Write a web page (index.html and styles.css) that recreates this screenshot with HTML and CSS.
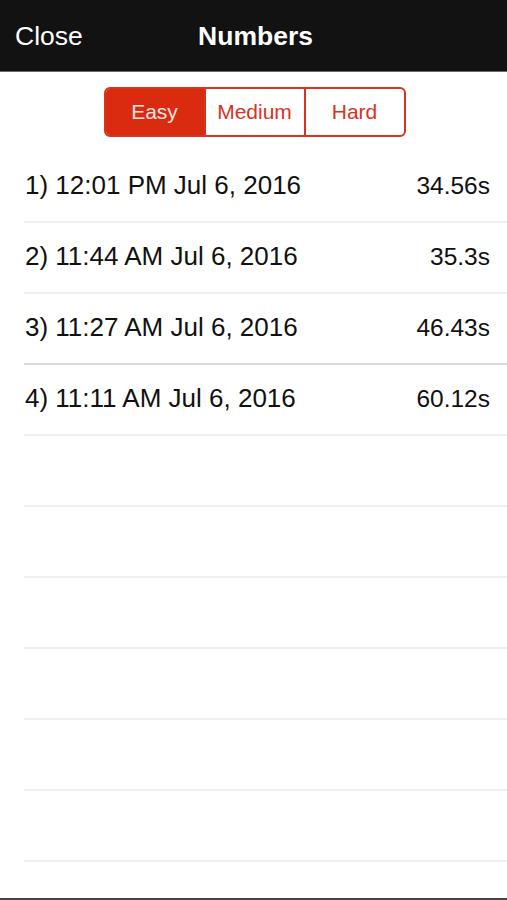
FILE: index.html
```html
<!DOCTYPE html>
<html>
<head>
<meta charset="utf-8">
<link rel="stylesheet" href="styles.css">
</head>
<body>
<div class="screen">
  <header class="navbar">
    <span class="nav-left">Close</span>
    <span class="nav-title">Numbers</span>
    <span class="nav-right"></span>
  </header>
  <div class="seg-wrap">
    <div class="segmented">
      <div class="seg active">Easy</div>
      <div class="seg">Medium</div>
      <div class="seg">Hard</div>
    </div>
  </div>
  <ul class="list">
    <li class="row"><span class="label">1) 12:01 PM Jul 6, 2016</span><span class="value">34.56s</span></li>
    <li class="row"><span class="label">2) 11:44 AM Jul 6, 2016</span><span class="value">35.3s</span></li>
    <li class="row dark-sep"><span class="label">3) 11:27 AM Jul 6, 2016</span><span class="value">46.43s</span></li>
    <li class="row"><span class="label">4) 11:11 AM Jul 6, 2016</span><span class="value">60.12s</span></li>
    <li class="row"></li>
    <li class="row"></li>
    <li class="row"></li>
    <li class="row"></li>
    <li class="row"></li>
    <li class="row"></li>
  </ul>
  <div class="spacer"></div>
  <div class="bottom-edge"></div>
</div>
</body>
</html>
```

FILE: styles.css
```css
* { box-sizing: border-box; }
html, body { margin: 0; padding: 0; background: #fff; }
body { font-family: "Liberation Sans", Arial, sans-serif; }

.screen {
  width: 507px;
  height: 900px;
  display: flex;
  flex-direction: column;
  overflow: hidden;
}

.navbar {
  height: 72px;
  background: #121212;
  border-bottom: 1px solid #6a6a6a;
  display: flex;
  align-items: center;
  justify-content: space-between;
  padding: 0 15px 0 15px;
  color: #fff;
  font-size: 26.5px;
}
.nav-left, .nav-right { width: 90px; }
.nav-left { position: relative; top: 1px; }
.nav-title { font-weight: bold; position: relative; top: 1px; left: 2px; }

.seg-wrap {
  display: flex;
  justify-content: center;
  padding-top: 15px;
  padding-left: 2px;
}
.segmented {
  display: flex;
  width: 302px;
  height: 50px;
  border: 2px solid #d9321d;
  border-radius: 6px;
  overflow: hidden;
}
.seg {
  flex: 1;
  display: flex;
  align-items: center;
  justify-content: center;
  color: #d9321d;
  font-size: 21px;
  border-left: 2px solid #d9321d;
}
.seg:first-child { border-left: none; }
.seg.active { background: #da2a10; color: #fbe5e0; }

.list {
  list-style: none;
  margin: 15px 0 0 0;
  padding: 0 0 0 24px;
}
.row {
  height: 71px;
  border-bottom: 2px solid #efefef;
  display: flex;
  align-items: center;
  justify-content: space-between;
  padding: 0 17px 2px 1px;
  font-size: 26px;
  color: #111;
}
.row.dark-sep { border-bottom-color: #dadada; }
.value { font-size: 24.5px; }

.spacer { flex: 1; }
.bottom-edge { height: 2px; background: #444; }
```
